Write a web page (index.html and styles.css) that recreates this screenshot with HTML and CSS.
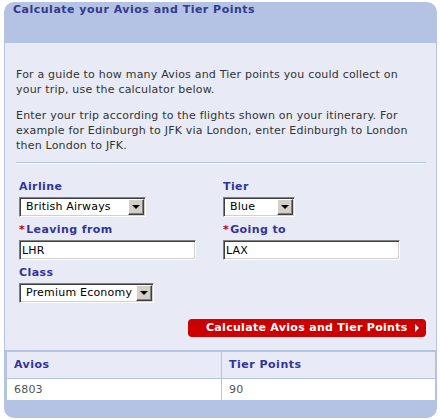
FILE: index.html
```html
<!DOCTYPE html>
<html>
	<head>
		<title>Calculate your Avios and Tier Points</title>
		<meta charset="UTF-8">
		<link rel="stylesheet" href="styles.css">
	</head>
	<body>
		<div class='panel'>
			<h2 class='panelTitle'>Calculate your Avios and Tier Points</h2>
			<div class='content'>
				<p class='first'>For a guide to how many Avios and Tier points you could collect on your trip, use the calculator below.</p>
				<p>Enter your trip according to the flights shown on your itinerary. For example for Edinburgh to JFK via London, enter Edinburgh to London then London to JFK.</p>
				<div class='sep'></div>
				<form action='javascript:void(0);' class='calc'>
					<div class='fields'>
						<div class='field'>
							<span class='label'>Airline</span>
							<div class='select w127'><span class='val'>British Airways</span><span class='drop'></span></div>
						</div>
						<div class='field'>
							<span class='label'>Tier</span>
							<div class='select w72'><span class='val'>Blue</span><span class='drop'></span></div>
						</div>
						<div class='field'>
							<span class='label'><span class='req'>*</span>Leaving from</span>
							<input type='text' class='txt' value='LHR'>
						</div>
						<div class='field'>
							<span class='label'><span class='req'>*</span>Going to</span>
							<input type='text' class='txt' value='LAX'>
						</div>
						<div class='field'>
							<span class='label'>Class</span>
							<div class='select w135'><span class='val'>Premium Economy</span><span class='drop'></span></div>
						</div>
					</div>
					<div class='actions'>
						<button type='button' class='btnRed'><span class='btnText'>Calculate Avios and Tier Points</span><span class='tri'></span></button>
					</div>
				</form>
			</div>
			<div class='results'>
				<div class='th'>Avios</div>
				<div class='th'>Tier Points</div>
				<div class='td'>6803</div>
				<div class='td'>90</div>
			</div>
			<div class='panelFoot'></div>
		</div>
	</body>
</html>
```

FILE: styles.css
```css
*{
	box-sizing:border-box;
}
body{
	margin:0;
	background-color:#fff;
	font-family:"DejaVu Sans", Verdana, sans-serif;
	font-size:11px;
	letter-spacing:0.2px;
	color:#333;
}
.panel{
	width:433px;
	margin:2px 0 0 4px;
	background-color:#b4c3e3;
	border-radius:10px;
}
.panelTitle{
	margin:0;
	height:41px;
	padding:1px 0 0 9px;
	font-size:11px;
	line-height:14px;
	letter-spacing:0.5px;
	color:#313a8e;
}
.content{
	margin:0 1px;
	background-color:#e8ebf5;
	padding:24px 0 13px 0;
	height:307px;
}
.content p{
	margin:11px 12px 0 11px;
	line-height:15px;
}
.content p.first{
	margin-top:0;
}
.sep{
	margin:9px 10px 0 11px;
	border-top:1px solid #b4c3e3;
	border-bottom:1px solid #fff;
}
.calc{
	padding:16px 10px 0 14px;
}
.fields{
	display:grid;
	grid-template-columns:204px 1fr;
	row-gap:6px;
}
.label{
	display:block;
	line-height:14px;
	margin-bottom:3px;
	font-weight:bold;
	letter-spacing:0.4px;
	color:#333399;
}
.req{
	color:#cc0000;
	margin-right:1px;
}
.select{
	display:flex;
	align-items:center;
	height:20px;
	background-color:#fff;
	border:1px solid;
	border-color:#808080 #fff #fff #808080;
	box-shadow:inset 1px 1px #404040, inset -1px -1px #d4d0c8;
	padding:1px;
	color:#000;
}
.w127{ width:127px; }
.w72{ width:72px; }
.w135{ width:135px; }
.select .val{
	flex:1;
	padding-left:5px;
	line-height:16px;
	white-space:nowrap;
}
.drop{
	position:relative;
	width:16px;
	height:16px;
	background-color:#d4d0c8;
	border:1px solid;
	border-color:#fff #404040 #404040 #fff;
	box-shadow:inset -1px -1px #808080;
}
.drop:after{
	content:"";
	position:absolute;
	left:3px;
	top:5px;
	border-left:4px solid transparent;
	border-right:4px solid transparent;
	border-top:4px solid #000;
}
.txt{
	display:block;
	width:177px;
	height:20px;
	margin:0;
	padding:0 0 0 2px;
	font-family:"DejaVu Sans", Verdana, sans-serif;
	font-size:11px;
	letter-spacing:0.2px;
	color:#000;
	background-color:#fff;
	border:1px solid;
	border-color:#808080 #fff #fff #808080;
	box-shadow:inset 1px 1px #404040, inset -1px -1px #d4d0c8;
	outline:none;
}
.actions{
	display:flex;
	justify-content:flex-end;
	margin-top:16px;
}
.btnRed{
	display:flex;
	align-items:center;
	width:238px;
	height:18px;
	padding:0 0 0 18px;
	border:none;
	border-radius:4px;
	background-color:#cc0000;
	color:#fff;
	font-family:"DejaVu Sans", Verdana, sans-serif;
	font-size:11px;
	font-weight:bold;
	letter-spacing:0.3px;
	white-space:nowrap;
	cursor:pointer;
}
.btnText{
	line-height:18px;
}
.tri{
	margin-left:auto;
	margin-right:7px;
	border-top:4px solid transparent;
	border-bottom:4px solid transparent;
	border-left:4px solid #fff;
}
.results{
	display:grid;
	grid-template-columns:214px 213px;
	grid-template-rows:26px 21px;
	gap:1px;
	padding:2px 2px 0 3px;
}
.th{
	background-color:#e8ebf5;
	padding-left:7px;
	line-height:26px;
	font-weight:bold;
	letter-spacing:0.5px;
	color:#333399;
}
.td{
	background-color:#fff;
	padding-left:7px;
	line-height:21px;
	color:#555;
}
.panelFoot{
	height:18px;
}
```
